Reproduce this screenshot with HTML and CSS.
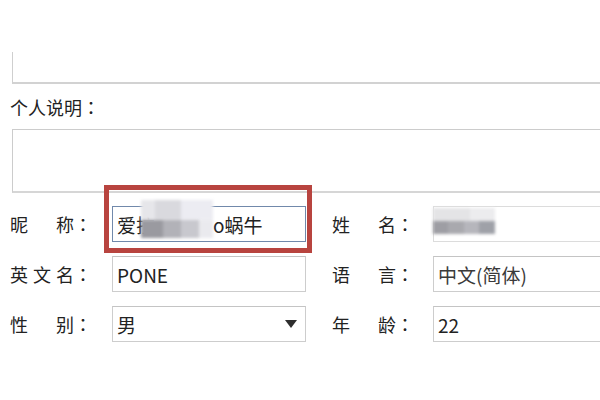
FILE: index.html
```html
<!DOCTYPE html>
<html lang="zh-CN">
<head>
<meta charset="utf-8">
<title>个人资料</title>
<link rel="stylesheet" href="styles.css">
</head>
<body>
<div class="page">
  <div class="box box-top"></div>
  <div class="section-label">个人说明<span class="colon">：</span></div>
  <div class="box box-desc"></div>

  <div class="form">
    <div class="label"><span class="chars"><span>昵</span><span>称</span></span><span class="colon">：</span></div>
    <div class="field field-focus">
      <span>爱拉</span><span class="skip"></span><span>o蜗牛</span>
      <span class="mosaic mosaic-nick"></span>
      <span class="highlight"></span>
    </div>
    <div class="label label-right"><span class="chars"><span>姓</span><span>名</span></span><span class="colon">：</span></div>
    <div class="field field-open field-name">
      <span class="mosaic mosaic-name"></span>
    </div>

    <div class="label"><span class="chars"><span>英</span><span>文</span><span>名</span></span><span class="colon">：</span></div>
    <div class="field">PONE</div>
    <div class="label label-right"><span class="chars"><span>语</span><span>言</span></span><span class="colon">：</span></div>
    <div class="field field-open field-lang">中文(简体)</div>

    <div class="label"><span class="chars"><span>性</span><span>别</span></span><span class="colon">：</span></div>
    <div class="field field-select"><span class="value">男</span><span class="arrow"></span></div>
    <div class="label label-right"><span class="chars"><span>年</span><span>龄</span></span><span class="colon">：</span></div>
    <div class="field field-open">22</div>
  </div>
</div>
</body>
</html>
```

FILE: styles.css
```css
html, body {
  margin: 0;
  padding: 0;
  background: #ffffff;
}

body {
  width: 600px;
  height: 400px;
  overflow: hidden;
  font-family: "Noto Sans CJK SC", "Noto Sans", sans-serif;
  color: #222222;
}

.page {
  padding-top: 52px;
}

.box {
  margin-left: 12px;
  box-sizing: border-box;
}

.box-top {
  height: 32px;
  border-left: 1px solid #cfcfcf;
  border-bottom: 2px solid #d2d2d2;
}

.section-label {
  display: flex;
  margin: 11px 0 0 10px;
  font-size: 18px;
  line-height: 24px;
  height: 24px;
}

.box-desc {
  margin-top: 10px;
  height: 64px;
  border: 1px solid #cccccc;
  border-right: none;
  border-bottom: 2px solid #d6d6d6;
}

.form {
  display: grid;
  grid-template-columns: 102px 194px 127px 1fr;
  grid-auto-rows: 36px;
  row-gap: 14px;
  margin-top: 13px;
  padding-left: 10px;
}

.label {
  display: flex;
  align-items: center;
  font-size: 18px;
  line-height: 24px;
}

.label-right {
  padding-left: 26px;
}

.chars {
  display: flex;
  justify-content: space-between;
  width: 64px;
}

.colon {
  width: 18px;
  font-family: "Noto Sans CJK JP", "Noto Sans CJK SC", sans-serif;
  text-align: center;
}

.field {
  position: relative;
  display: flex;
  align-items: center;
  box-sizing: border-box;
  border: 1px solid #cdcdcd;
  border-top-color: #c4c4c4;
  padding-left: 4px;
  font-size: 19px;
  white-space: nowrap;
}

.field-open {
  border-right: none;
}

.field-focus {
  border: 1px solid #7189ab;
}

.skip {
  display: inline-block;
  width: 58px;
}

.field-name {
  border-color: #dcdcdc;
}

.field-lang {
  color: #3a3a3a;
}

.field-select {
  justify-content: space-between;
  padding-right: 8px;
}

.arrow {
  width: 0;
  height: 0;
  border-left: 6px solid transparent;
  border-right: 6px solid transparent;
  border-top: 8px solid #2e2e2e;
}

.mosaic {
  position: absolute;
  filter: blur(1.5px);
}

.mosaic-nick {
  left: 28px;
  top: -7px;
  width: 72px;
  height: 38px;
  background:
    linear-gradient(90deg, #9a9aa0 0 30%, #b2b2b8 30% 55%, #c8c8ce 55% 80%, rgba(220,220,226,0.6) 80%) bottom / 100% 48% no-repeat,
    linear-gradient(90deg, #e6e6ea 0 20%, #d9d9de 20% 55%, #ececf2 55% 100%) top / 100% 52% no-repeat;
}

.mosaic-name {
  left: -1px;
  top: 1px;
  width: 62px;
  height: 26px;
  background:
    linear-gradient(90deg, #9e9ea4 0 25%, #a9a9ae 25% 50%, #b6b6bc 50% 75%, #9fa1a8 75%) bottom / 100% 50% no-repeat,
    linear-gradient(90deg, #e4e4e6 0 60%, #ececee 60% 100%) top / 100% 50% no-repeat;
}

.highlight {
  position: absolute;
  left: -9px;
  right: -7px;
  top: -22px;
  bottom: -12px;
  border: 5px solid #b8443f;
  pointer-events: none;
}
```
